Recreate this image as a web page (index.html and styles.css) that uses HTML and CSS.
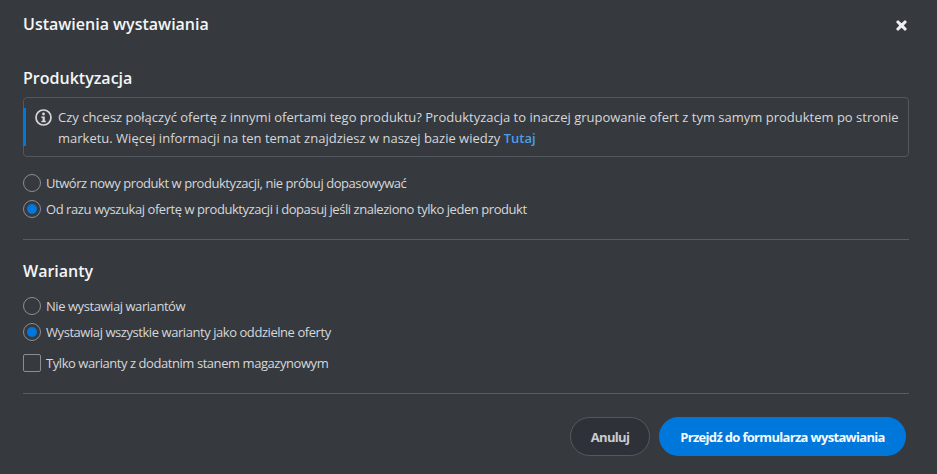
FILE: index.html
```html
<!DOCTYPE html>
<html lang="pl">
<head>
<meta charset="utf-8">
<title>Ustawienia wystawiania</title>
<link rel="stylesheet" href="styles.css">
</head>
<body>
<div class="modal">
  <header class="modal-header">
    <h1 class="modal-title">Ustawienia wystawiania</h1>
    <button class="close" aria-label="Zamknij">
      <svg viewBox="0 0 11 11" width="11" height="11"><path d="M2.5 0.4 5.5 3.2 8.5 0.4Q9 0 9.5 0.4L10.6 1.5Q11 2 10.6 2.5L7.8 5.5 10.6 8.5Q11 9 10.6 9.5L9.5 10.6Q9 11 8.5 10.6L5.5 7.8 2.5 10.6Q2 11 1.5 10.6L0.4 9.5Q0 9 0.4 8.5L3.2 5.5 0.4 2.5Q0 2 0.4 1.5L1.5 0.4Q2 0 2.5 0.4Z" fill="#eceef1"/></svg>
    </button>
  </header>

  <h2 class="section-title first">Produktyzacja</h2>
  <div class="info">
    <span class="info-bar"></span>
    <svg class="info-icon" viewBox="0 0 17 17" width="17" height="17">
      <circle cx="8.5" cy="8.5" r="7.5" fill="none" stroke="#d5d7dc" stroke-width="1.7"/>
      <circle cx="8.5" cy="5" r="1.4" fill="#d5d7dc"/>
      <path d="M6.4 7.4h3.4v4.4h1v1.5H6.4v-1.5h1.2V8.9H6.4Z" fill="#d5d7dc"/>
    </svg>
    <p class="info-text">Czy chcesz połączyć ofertę z innymi ofertami tego produktu? Produktyzacja to inaczej grupowanie ofert z tym samym produktem po stronie marketu. Więcej informacji na ten temat znajdziesz w naszej bazie wiedzy <a class="link" href="#">Tutaj</a></p>
  </div>
  <div class="options first-options">
    <label class="option"><span class="radio"></span><span>Utwórz nowy produkt w produktyzacji, nie próbuj dopasowywać</span></label>
    <label class="option"><span class="radio checked"></span><span>Od razu wyszukaj ofertę w produktyzacji i dopasuj jeśli znaleziono tylko jeden produkt</span></label>
  </div>
  <hr class="divider divider-one">

  <h2 class="section-title">Warianty</h2>
  <div class="options">
    <label class="option"><span class="radio"></span><span>Nie wystawiaj wariantów</span></label>
    <label class="option"><span class="radio checked"></span><span>Wystawiaj wszystkie warianty jako oddzielne oferty</span></label>
    <label class="option check-option"><span class="checkbox"></span><span>Tylko warianty z dodatnim stanem magazynowym</span></label>
  </div>
  <hr class="divider divider-two">

  <footer class="actions">
    <button class="btn btn-cancel">Anuluj</button>
    <button class="btn btn-primary">Przejdź do formularza wystawiania</button>
  </footer>
</div>
</body>
</html>
```

FILE: styles.css
```css
* { box-sizing: border-box; }
html, body { margin: 0; height: 100%; }
body {
  background: #363a3e;
  font-family: "Open Sans", sans-serif;
  overflow: hidden;
}
.modal { padding: 13px 28px 0 23px; }
.modal-header {
  display: flex;
  justify-content: space-between;
  height: 22px;
}
.modal-title {
  margin: 0;
  font-size: 16px;
  line-height: 22px;
  font-weight: 600;
  color: #f4f5f6;
}
.close {
  margin: 7px 2px 0 0;
  padding: 0;
  width: 11px;
  height: 11px;
  border: 0;
  background: none;
  display: block;
}
.close svg { display: block; }
.section-title {
  margin: 0;
  font-size: 16px;
  line-height: 22px;
  font-weight: 600;
  color: #f4f5f6;
}
.section-title.first { margin-top: 32px; }
.info {
  position: relative;
  margin-top: 8px;
  height: 60px;
  border: 1px solid #53575f;
  border-radius: 4px;
  padding: 9px 8px 0 11px;
  display: flex;
  gap: 6px;
}
.info-bar {
  position: absolute;
  left: -1px;
  top: 10px;
  width: 3px;
  height: 38px;
  background: #0078db;
}
.info-icon { flex: none; margin-top: 2px; }
.info-text {
  margin: 0;
  font-size: 13px;
  line-height: 21px;
  color: #d5d7dc;
}
.link { color: #4a9fe8; font-weight: 600; text-decoration: none; }
.options { display: flex; flex-direction: column; gap: 8px; }
.first-options { margin-top: 17px; }
.section-title + .options { margin-top: 15px; }
.option {
  display: flex;
  align-items: center;
  gap: 5px;
  height: 18px;
  font-size: 13px;
  letter-spacing: -0.44px;
  color: #d5d7dc;
}
.check-option { margin-top: 5px; }
.radio {
  flex: none;
  width: 18px;
  height: 18px;
  border: 1px solid #8a8d94;
  border-radius: 50%;
  display: flex;
  align-items: center;
  justify-content: center;
}
.radio.checked::after {
  content: "";
  width: 10px;
  height: 10px;
  border-radius: 50%;
  background: #0078db;
}
.checkbox {
  flex: none;
  width: 18px;
  height: 18px;
  border: 1px solid #8a8d94;
  border-radius: 2px;
}
.divider {
  margin: 0;
  border: 0;
  height: 1px;
  background: #5a5d63;
}
.divider-one { margin-top: 21px; margin-bottom: 20px; }
.divider-two { margin-top: 21px; }
.actions {
  margin-top: 23px;
  margin-right: 3px;
  display: flex;
  justify-content: flex-end;
  gap: 9px;
}
.btn {
  height: 39px;
  border-radius: 20px;
  font-family: inherit;
  font-size: 13px;
  font-weight: 700;
  letter-spacing: -0.68px;
  padding: 0;
}
.btn-cancel {
  width: 80px;
  background: #2e3138;
  border: 1px solid #55585f;
  color: #c9cbd0;
}
.btn-primary {
  width: 247px;
  background: #0078db;
  border: 0;
  color: #f6f8fa;
}
```
